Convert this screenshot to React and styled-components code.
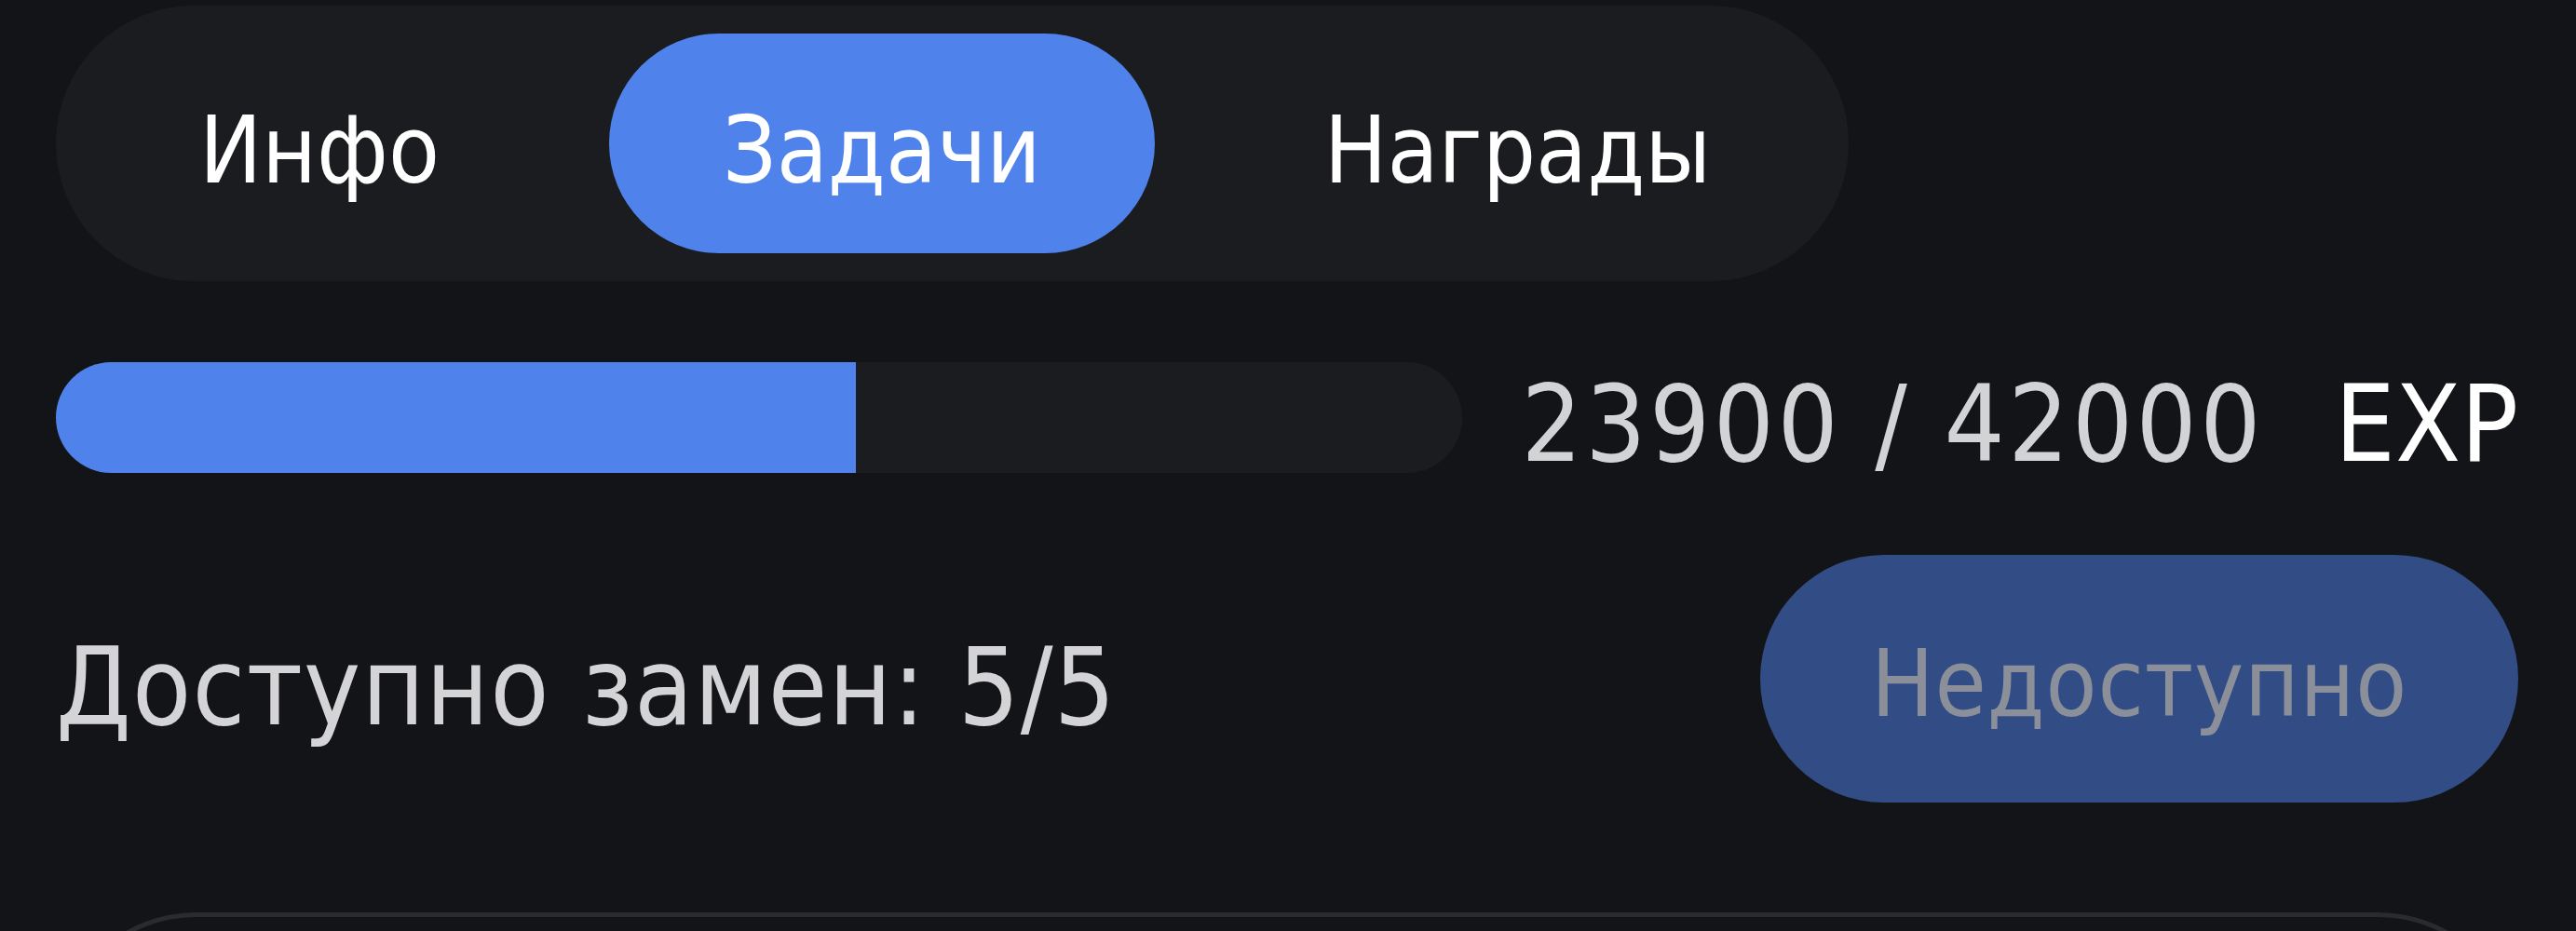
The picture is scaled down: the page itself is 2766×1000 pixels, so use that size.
import React, { useState } from "react"
import styled, { createGlobalStyle } from "styled-components"

const GlobalStyle = createGlobalStyle`
  html, body {
    margin: 0;
    padding: 0;
    background: #131417;
  }
  body {
    font-family: "DejaVu Sans Condensed", "DejaVu Sans", sans-serif;
    color: #fff;
  }
`

const tabs = ["Инфо", "Задачи", "Награды"]

const progress = { current: 23900, total: 42000 }

const App = () => {
  const [activeTab, setActiveTab] = useState(1)

  const percent = (progress.current / progress.total) * 100

  return (
    <>
      <GlobalStyle />
      <Page>
        <TabBar>
          {tabs.map((tab, index) => (
            <Tab
              key={tab}
              $active={index === activeTab}
              onClick={() => setActiveTab(index)}
            >
              {tab}
            </Tab>
          ))}
        </TabBar>

        <ProgressRow>
          <Track>
            <Fill style={{ width: `${percent}%` }} />
          </Track>
          <ExpLabel>
            <ExpValue>{progress.current} / {progress.total}</ExpValue>
            <ExpUnit>EXP</ExpUnit>
          </ExpLabel>
        </ProgressRow>

        <SwapRow>
          <SwapInfo>Доступно замен: 5/5</SwapInfo>
          <SwapButton disabled>Недоступно</SwapButton>
        </SwapRow>

        <TaskCard />
      </Page>
    </>
  )
}

const Page = styled.div`
  padding: 6px 62px 0 60px;
  height: 1000px;
  box-sizing: border-box;
  overflow: hidden;
`

const TabBar = styled.div`
  display: flex;
  align-items: center;
  gap: 60px;
  width: 1925px;
  height: 296px;
  box-sizing: border-box;
  padding: 0 32px;
  background: #1b1c20;
  border-radius: 148px;
`

const Tab = styled.button`
  height: 236px;
  padding: 16px 122px 0;
  border: none;
  border-radius: 118px;
  background: ${props => props.$active ? "#4f83eb" : "transparent"};
  color: #fff;
  font-family: inherit;
  font-size: 100px;
  line-height: 1;
  cursor: pointer;
`

const ProgressRow = styled.div`
  display: flex;
  align-items: center;
  gap: 64px;
  height: 119px;
  margin-top: 87px;
`

const Track = styled.div`
  flex: 1;
  height: 119px;
  border-radius: 60px;
  background: #1b1c1f;
  overflow: hidden;
`

const Fill = styled.div`
  height: 100%;
  background: #4f83eb;
`

const ExpLabel = styled.div`
  display: flex;
  align-items: center;
  gap: 76px;
  padding-top: 14px;
  font-size: 114px;
  line-height: 1;
`

const ExpValue = styled.span`
  color: #d2d3d5;
  letter-spacing: 3.5px;
`

const ExpUnit = styled.span`
  color: #fff;
`

const SwapRow = styled.div`
  display: flex;
  align-items: center;
  justify-content: space-between;
  margin-top: 88px;
`

const SwapInfo = styled.span`
  padding-top: 18px;
  color: #d4d4d6;
  font-size: 115px;
  letter-spacing: 1.2px;
  line-height: 1;
`

const SwapButton = styled.button`
  width: 814px;
  height: 266px;
  padding: 12px 0 0;
  border: none;
  border-radius: 133px;
  background: #324d85;
  color: #8b8f99;
  font-family: inherit;
  font-size: 100px;
  letter-spacing: 0.8px;
  line-height: 1;
`

const TaskCard = styled.div`
  margin-top: 118px;
  height: 400px;
  border: 5px solid #2a2b2e;
  border-radius: 150px;
`

export default App
